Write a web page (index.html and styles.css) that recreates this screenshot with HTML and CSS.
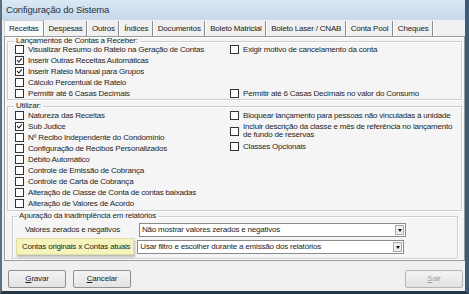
FILE: index.html
```html
<!DOCTYPE html>
<html lang="pt">
<head>
    <meta charset="UTF-8">
    <title>Configuração do Sistema</title>
    <link rel="stylesheet" href="styles.css">
</head>
<body>
    <div class="window">
        <div class="titlebar">Configuração do Sistema</div>

        <div class="tabs">
            <span class="tab active">Receitas</span>
            <span class="tab">Despesas</span>
            <span class="tab">Outros</span>
            <span class="tab">Índices</span>
            <span class="tab">Documentos</span>
            <span class="tab">Boleto Matricial</span>
            <span class="tab">Boleto Laser / CNAB</span>
            <span class="tab">Conta Pool</span>
            <span class="tab">Cheques</span>
        </div>

        <div class="panel">
            <fieldset class="group group-lanc">
                <legend>Lançamentos de Contas a Receber:</legend>
                <div class="cols">
                    <div class="col">
                        <label class="check"><span class="box"></span>Visualizar Resumo do Rateio na Geração de Contas</label>
                        <label class="check"><span class="box checked"></span>Inserir Outras Receitas Automáticas</label>
                        <label class="check"><span class="box checked"></span>Inserir Rateio Manual para Grupos</label>
                        <label class="check"><span class="box"></span>Cálculo Percentual de Rateio</label>
                        <label class="check"><span class="box"></span>Permitir até 6 Casas Decimais</label>
                    </div>
                    <div class="col">
                        <label class="check"><span class="box"></span>Exigir motivo de cancelamento da conta</label>
                        <label class="check push"><span class="box"></span>Permitir até 6 Casas Decimais no valor do Consumo</label>
                    </div>
                </div>
            </fieldset>

            <fieldset class="group group-util">
                <legend>Utilizar:</legend>
                <div class="cols">
                    <div class="col">
                        <label class="check"><span class="box"></span>Natureza das Receitas</label>
                        <label class="check"><span class="box checked"></span>Sub Judice</label>
                        <label class="check"><span class="box"></span>Nº Recibo Independente do Condomínio</label>
                        <label class="check"><span class="box"></span>Configuração de Recibos Personalizados</label>
                        <label class="check"><span class="box"></span>Débito Automático</label>
                        <label class="check"><span class="box"></span>Controle de Emissão de Cobrança</label>
                        <label class="check"><span class="box"></span>Controle de Carta de Cobrança</label>
                        <label class="check"><span class="box"></span>Alteração de Classe de Conta de contas baixadas</label>
                        <label class="check"><span class="box"></span>Alteração de Valores de Acordo</label>
                    </div>
                    <div class="col">
                        <label class="check"><span class="box"></span>Bloquear lançamento para pessoas não vinculadas à unidade</label>
                        <label class="check two-lines"><span class="box"></span>Incluir descrição da classe e mês de referência no lançamento de fundo de reservas</label>
                        <label class="check"><span class="box"></span>Classes Opcionais</label>
                    </div>
                </div>
            </fieldset>

            <fieldset class="group group-apur">
                <legend>Apuração da inadimplência em relatórios</legend>
                <div class="field">
                    <span class="field-label">Valores zerados e negativos</span>
                    <div class="select">Não mostrar valores zerados e negativos<span class="arrow"></span></div>
                </div>
                <div class="field">
                    <span class="field-label hint">Contas originais x Contas atuais</span>
                    <div class="select">Usar filtro e escolher durante a emissão dos relatórios<span class="arrow"></span></div>
                </div>
            </fieldset>
        </div>

        <div class="footer">
            <button class="btn"><u>G</u>ravar</button>
            <button class="btn"><u>C</u>ancelar</button>
            <button class="btn btn-right" disabled><u>S</u>air</button>
        </div>
    </div>
</body>
</html>
```

FILE: styles.css
```css
body {
    margin: 0;
    padding: 0;
    font-family: "Liberation Sans", Arial, sans-serif;
    font-size: 8px;
    letter-spacing: -0.2px;
    color: #1e1e1e;
    background-color: #2f4254;
}
.window {
    width: 463px;
    height: 291px;
    background-color: #f0f0f0;
    border-left: 2px solid #5d6e7e;
    border-right: 4px solid #3c5c7c;
    border-bottom: 3px solid #233746;
    display: flex;
    flex-direction: column;
}
.titlebar {
    flex: none;
    height: 20px;
    line-height: 20px;
    padding-left: 4px;
    font-size: 9.5px;
    letter-spacing: -0.15px;
    color: #1e3246;
    background: linear-gradient(#dce8f4, #c4d7ec);
}
.tabs {
    flex: none;
    display: flex;
    height: 16px;
    padding-left: 2px;
    white-space: nowrap;
}
.tab {
    padding: 0 3.5px 0 4px;
    margin-right: 1px;
    line-height: 15px;
    margin-top: 1px;
    border-right: 1px solid #8c8c8c;
    box-shadow: 1px 0 0 #fff;
    color: #222;
}
.tab.active {
    margin-top: 0;
    padding: 0 4px;
    line-height: 16px;
    background-color: #fbfbfb;
    border-left: 1px solid #cfcfcf;
    border-top: 1px solid #cfcfcf;
}
.panel {
    flex: none;
    margin: 0 0 0 2px;
    height: 223px;
    background-color: #f5f5f5;
    border: 1px solid #9a9a9a;
    box-shadow: inset 1px 1px 0 #fff;
    padding: 0 2px;
    display: flex;
    flex-direction: column;
}
.group {
    margin: 0;
    padding: 0 0 0 7px;
    border: 1px solid #cfcfcf;
    box-shadow: inset 1px 1px 0 #fff, 1px 1px 0 #fff;
}
.group legend {
    padding: 0 2px;
    margin-left: -1px;
    line-height: 8px;
}
.cols {
    display: grid;
    grid-template-columns: 215px 1fr;
}
.col {
    display: flex;
    flex-direction: column;
}
.check {
    display: flex;
    align-items: center;
    height: 11px;
    white-space: nowrap;
}
.check.push {
    margin-top: auto;
}
.check.two-lines {
    height: 20px;
    white-space: normal;
    line-height: 8px;
}
.box {
    flex: none;
    width: 7px;
    height: 7px;
    border: 1px solid #333;
    background-color: #fff;
    margin-right: 4px;
    position: relative;
}
.box.checked::after {
    content: "";
    position: absolute;
    left: 2px;
    top: 0;
    width: 1.5px;
    height: 4px;
    border-right: 1.5px solid #111;
    border-bottom: 1.5px solid #111;
    transform: rotate(40deg);
}
.group-lanc {
    margin-top: 0;
    height: 63px;
    box-sizing: border-box;
}
.group-lanc legend {
    margin-bottom: -1px;
}
.group-util {
    margin-top: 2px;
    height: 109px;
    box-sizing: border-box;
}
.group-apur {
    margin: 1px 4px 0 5px;
    padding: 1px 5px 3px 5px;
    height: 47px;
    box-sizing: border-box;
}
.field {
    display: flex;
    align-items: center;
    height: 17px;
}
.field-label {
    flex: none;
    width: 112px;
    padding-left: 7px;
    white-space: nowrap;
}
.field-label.hint {
    width: auto;
    padding: 3px 3px 3px 5px;
    margin-left: -2px;
    margin-right: 1px;
    background-color: #f4f4bc;
    border: 1px solid #e0e0a4;
    box-shadow: 1px 2px 2px rgba(0, 0, 0, 0.25);
}
.select {
    position: relative;
    width: 263px;
    height: 12px;
    line-height: 12px;
    padding-left: 2px;
    background-color: #fff;
    border: 1px solid #8a8a8a;
    margin-left: 2px;
    white-space: nowrap;
}
.arrow {
    position: absolute;
    right: 1px;
    top: 1px;
    width: 9px;
    height: 10px;
    background-color: #eee;
    border: 1px solid #aaa;
    box-sizing: border-box;
}
.arrow::after {
    content: "";
    position: absolute;
    left: 1.5px;
    top: 3px;
    border-left: 2.5px solid transparent;
    border-right: 2.5px solid transparent;
    border-top: 3px solid #111;
}
.footer {
    flex: 1;
    display: flex;
    align-items: center;
    padding: 5px 2px 0 6px;
    gap: 7px;
}
.btn {
    width: 58px;
    height: 18px;
    font-family: inherit;
    font-size: 8px;
    letter-spacing: -0.2px;
    color: #1e1e1e;
    background: linear-gradient(#f4f4f4, #e3e3e3);
    border: 1px solid #8f8f8f;
    border-radius: 2px;
    padding: 0;
}
.btn-right {
    margin-left: auto;
}
.btn:disabled {
    color: #a0a0a0;
    border-color: #b5b5b5;
}
```
